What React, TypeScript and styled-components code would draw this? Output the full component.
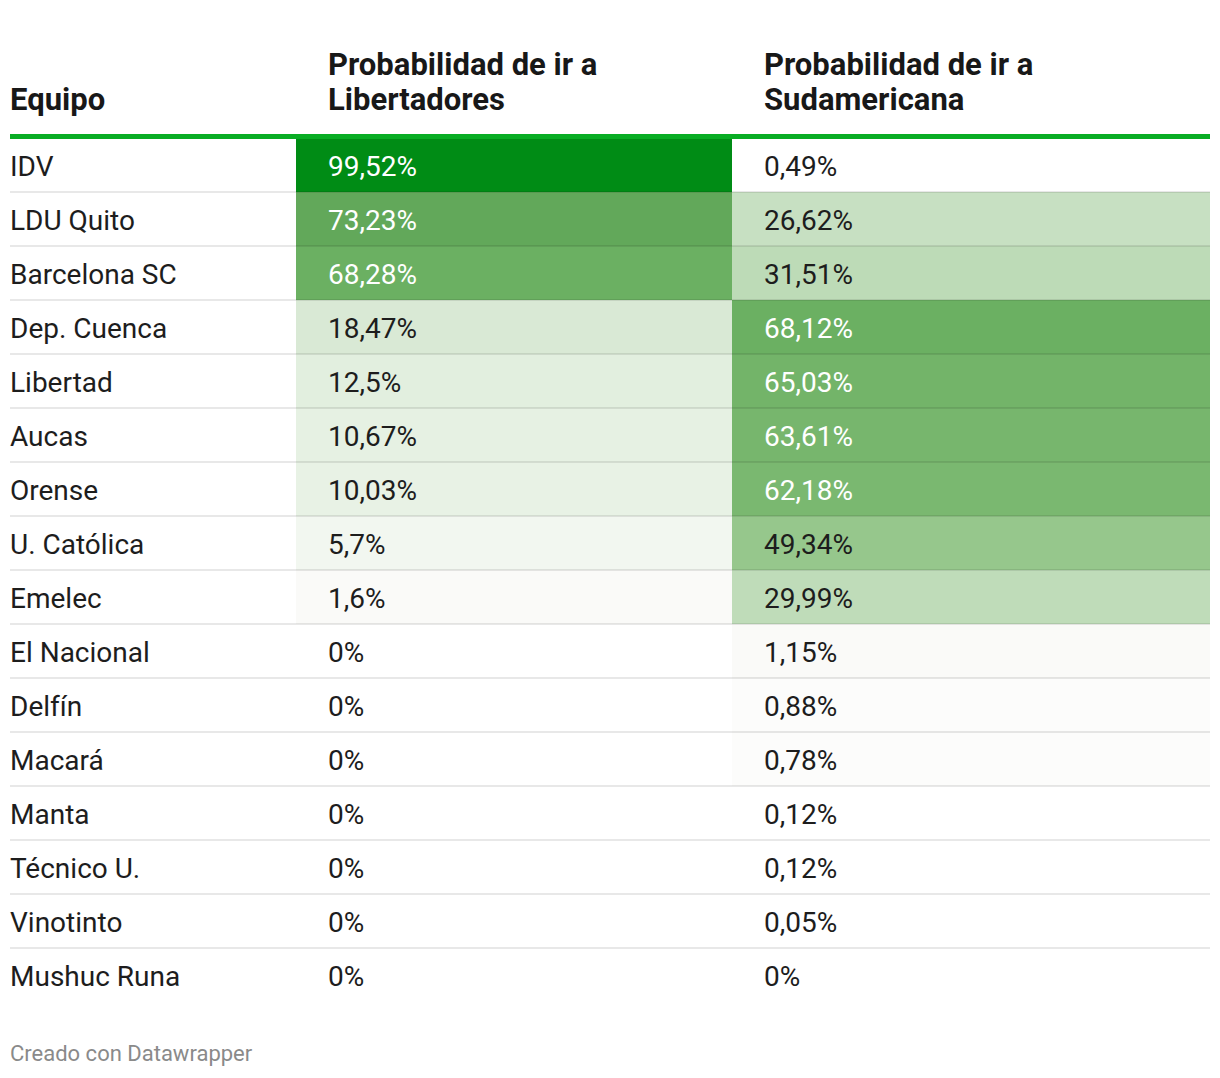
import React from 'react';
import styled, {createGlobalStyle} from 'styled-components';

const GlobalStyle = createGlobalStyle`
    body {
        margin: 0;
        background: #ffffff;
        font-family: Roboto, "Liberation Sans", sans-serif;
    }
`;

const Page = styled.div`
    padding: 47px 10px 0 10px;
    width: 1200px;
`;

const Table = styled.table`
    width: 1200px;
    border-collapse: collapse;
    table-layout: fixed;
`;

const HeadCell = styled.th<{ $first?: boolean; $width: number }>`
    box-sizing: border-box;
    width: ${p => p.$width}px;
    text-align: left;
    vertical-align: bottom;
    font-size: 31px;
    line-height: 35px;
    font-weight: 700;
    color: #181818;
    padding: 0 0 17px ${p => (p.$first ? 0 : 32)}px;
    border-bottom: 5px solid #09ad24;
`;

const Row = styled.tr<{ $last?: boolean }>`
    border-bottom: ${p => (p.$last ? 'none' : '2px solid rgba(0, 0, 0, 0.09)')};
`;

const Cell = styled.td<{ $first?: boolean; $bg?: string; $light?: boolean }>`
    height: 48px;
    padding: 4px 0 0 ${p => (p.$first ? 0 : 32)}px;
    font-size: 28px;
    line-height: 32px;
    color: ${p => (p.$light ? '#ffffff' : '#1d1d1d')};
    background: ${p => p.$bg || 'transparent'};
    white-space: nowrap;
`;

const Footer = styled.div`
    margin-top: 40px;
    font-size: 22px;
    line-height: 26px;
    color: #8a8a8a;
`;

type Value = { text: string; bg: string; light?: boolean };

const rows: { team: string; lib: Value; sud: Value }[] = [
    { team: 'IDV', lib: { text: '99,52%', bg: '#008c15', light: true }, sud: { text: '0,49%', bg: '#ffffff' } },
    { team: 'LDU Quito', lib: { text: '73,23%', bg: '#62a85a', light: true }, sud: { text: '26,62%', bg: '#c7e0c2' } },
    { team: 'Barcelona SC', lib: { text: '68,28%', bg: '#6bb062', light: true }, sud: { text: '31,51%', bg: '#bddbb7' } },
    { team: 'Dep. Cuenca', lib: { text: '18,47%', bg: '#d9e9d5' }, sud: { text: '68,12%', bg: '#6bb062', light: true } },
    { team: 'Libertad', lib: { text: '12,5%', bg: '#e2efdf' }, sud: { text: '65,03%', bg: '#73b469', light: true } },
    { team: 'Aucas', lib: { text: '10,67%', bg: '#e6f1e3' }, sud: { text: '63,61%', bg: '#77b66d', light: true } },
    { team: 'Orense', lib: { text: '10,03%', bg: '#e8f2e5' }, sud: { text: '62,18%', bg: '#7ab870', light: true } },
    { team: 'U. Católica', lib: { text: '5,7%', bg: '#f2f7f0' }, sud: { text: '49,34%', bg: '#96c78c' } },
    { team: 'Emelec', lib: { text: '1,6%', bg: '#fafaf8' }, sud: { text: '29,99%', bg: '#bfdcb9' } },
    { team: 'El Nacional', lib: { text: '0%', bg: '#ffffff' }, sud: { text: '1,15%', bg: '#fafaf8' } },
    { team: 'Delfín', lib: { text: '0%', bg: '#ffffff' }, sud: { text: '0,88%', bg: '#fcfcfb' } },
    { team: 'Macará', lib: { text: '0%', bg: '#ffffff' }, sud: { text: '0,78%', bg: '#fcfcfb' } },
    { team: 'Manta', lib: { text: '0%', bg: '#ffffff' }, sud: { text: '0,12%', bg: '#ffffff' } },
    { team: 'Técnico U.', lib: { text: '0%', bg: '#ffffff' }, sud: { text: '0,12%', bg: '#ffffff' } },
    { team: 'Vinotinto', lib: { text: '0%', bg: '#ffffff' }, sud: { text: '0,05%', bg: '#ffffff' } },
    { team: 'Mushuc Runa', lib: { text: '0%', bg: '#ffffff' }, sud: { text: '0%', bg: '#ffffff' } },
];

const App = () => {
    return (
        <Page>
            <GlobalStyle />
            <Table>
                <thead>
                    <tr>
                        <HeadCell $first $width={286}>Equipo</HeadCell>
                        <HeadCell $width={436}>Probabilidad de ir a<br />Libertadores</HeadCell>
                        <HeadCell $width={478}>Probabilidad de ir a<br />Sudamericana</HeadCell>
                    </tr>
                </thead>
                <tbody>
                    {rows.map((r, i) => (
                        <Row key={r.team} $last={i === rows.length - 1}>
                            <Cell $first>{r.team}</Cell>
                            <Cell $bg={r.lib.bg} $light={r.lib.light}>{r.lib.text}</Cell>
                            <Cell $bg={r.sud.bg} $light={r.sud.light}>{r.sud.text}</Cell>
                        </Row>
                    ))}
                </tbody>
            </Table>
            <Footer>Creado con Datawrapper</Footer>
        </Page>
    );
};

export default App;
